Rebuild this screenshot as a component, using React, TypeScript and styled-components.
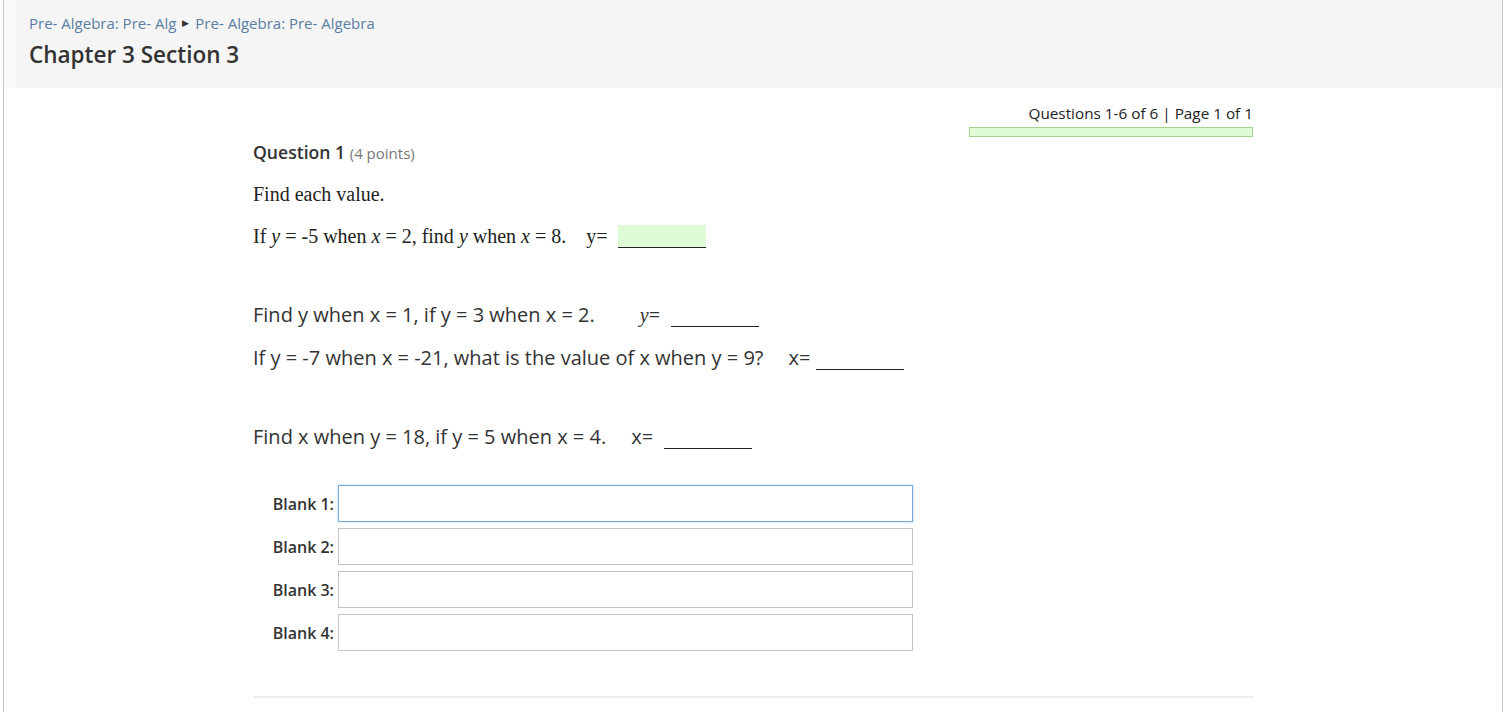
import { Fragment } from 'react';
import styled, { createGlobalStyle } from 'styled-components';

const GlobalStyle = createGlobalStyle`
  html, body {
    margin: 0;
    padding: 0;
    background: #fff;
    font-family: "Open Sans", "Liberation Sans", sans-serif;
    color: #333;
  }
`;

const Frame = styled.div`
  box-sizing: border-box;
  margin-left: 3px;
  width: 1500px;
  min-height: 712px;
  border-left: 1px solid #c8c8c8;
  border-right: 1px solid #c8c8c8;
`;

const Header = styled.header`
  box-sizing: border-box;
  height: 88px;
  padding: 12px 0 0 25px;
  background: linear-gradient(to right, #fbfbfb 0, #f5f5f5 18px);
`;

const Crumbs = styled.nav`
  font-size: 15px;
  line-height: 22px;
  color: #5a7ea3;
  display: flex;
  align-items: center;
  gap: 6px;
`;

const CrumbArrow = styled.span`
  font-size: 9px;
  color: #333;
`;

const Title = styled.h1`
  margin: 5px 0 0;
  font-size: 22.5px;
  line-height: 32px;
  font-weight: 600;
  color: #333;
`;

const Content = styled.main`
  width: 1000px;
  margin: 0 auto;
  padding-top: 14px;
`;

const Status = styled.div`
  display: flex;
  flex-direction: column;
  align-items: flex-end;
`;

const StatusText = styled.div`
  font-size: 15.3px;
  line-height: 22px;
  font-weight: 400;
  color: #222;
`;

const Progress = styled.div`
  box-sizing: border-box;
  margin-top: 3px;
  width: 284px;
  height: 10px;
  background: #e0fcd6;
  border: 1px solid #a3d393;
`;

const QuestionHead = styled.h2`
  margin: 2px 0 0;
  font-size: 17.6px;
  line-height: 26px;
  font-weight: 600;
  color: #333;
`;

const Points = styled.span`
  font-size: 15px;
  font-weight: 400;
  color: #777;
`;

const SerifLine = styled.p<{ $top: number }>`
  margin: ${p => p.$top}px 0 0;
  font-family: "Liberation Serif", "Times New Roman", serif;
  font-size: 20px;
  line-height: 26px;
  color: #222;
`;

const SansLine = styled.p<{ $top: number }>`
  margin: ${p => p.$top}px 0 0;
  font-size: 20px;
  line-height: 28px;
  color: #333;
`;

const Var = styled.i`
  font-family: "Liberation Serif", "Times New Roman", serif;
`;

const Gap = styled.span<{ $w: number }>`
  display: inline-block;
  width: ${p => p.$w}px;
`;

const Blank = styled.span<{ $filled?: boolean }>`
  display: inline-block;
  width: 88px;
  height: 22px;
  vertical-align: -5px;
  border-bottom: 1px solid #222;
  background: ${p => (p.$filled ? '#e0fcd6' : 'transparent')};
`;

const Answers = styled.div`
  margin-top: 34px;
  display: grid;
  grid-template-columns: 85px 575px;
  row-gap: 6px;
  align-items: center;
`;

const Label = styled.label`
  text-align: right;
  padding-right: 4px;
  font-size: 16px;
  font-weight: 600;
  color: #333;
`;

const Field = styled.input<{ $focus?: boolean }>`
  box-sizing: border-box;
  width: 575px;
  height: 37px;
  margin: 0;
  padding: 0 7px;
  font-size: 16px;
  font-family: inherit;
  border: 1px solid ${p => (p.$focus ? '#7aabd6' : '#c4c4c4')};
  box-shadow: ${p => (p.$focus ? '0 0 2px rgba(102,160,220,0.6)' : 'none')};
  outline: none;
  background: #fff;
`;

const Divider = styled.hr`
  margin: 45px 0 0;
  border: none;
  border-top: 2px solid #ececec;
`;

export default function App() {
  const blanks = [1, 2, 3, 4];
  return (
    <>
      <GlobalStyle />
      <Frame>
        <Header>
          <Crumbs>
            <span>Pre- Algebra: Pre- Alg</span>
            <CrumbArrow>▶</CrumbArrow>
            <span>Pre- Algebra: Pre- Algebra</span>
          </Crumbs>
          <Title>Chapter 3 Section 3</Title>
        </Header>
        <Content>
          <Status>
            <StatusText>Questions 1-6 of 6 | Page 1 of 1</StatusText>
            <Progress />
          </Status>
          <QuestionHead>
            Question 1 <Points>(4 points)</Points>
          </QuestionHead>
          <SerifLine $top={15}>Find each value.</SerifLine>
          <SerifLine $top={16}>
            If <i>y</i> = -5 when <i>x</i> = 2, find <i>y</i> when <i>x</i> = 8.<Gap $w={20} />y=<Gap $w={10} />
            <Blank $filled />
          </SerifLine>
          <SansLine $top={52}>
            Find y when x = 1, if y = 3 when x = 2.<Gap $w={45} />
            <Var>y</Var>=<Gap $w={11} />
            <Blank />
          </SansLine>
          <SansLine $top={15}>
            If y = -7 when x = -21, what is the value of x when y = 9?<Gap $w={25} />x=<Gap $w={6} />
            <Blank />
          </SansLine>
          <SansLine $top={51}>
            Find x when y = 18, if y = 5 when x = 4.<Gap $w={25} />x=<Gap $w={11} />
            <Blank />
          </SansLine>
          <Answers>
            {blanks.map(n => (
              <Fragment key={n}>
                <Label htmlFor={`blank${n}`}>Blank {n}:</Label>
                <Field id={`blank${n}`} type="text" $focus={n === 1} autoFocus={n === 1} />
              </Fragment>
            ))}
          </Answers>
          <Divider />
        </Content>
      </Frame>
    </>
  );
}
